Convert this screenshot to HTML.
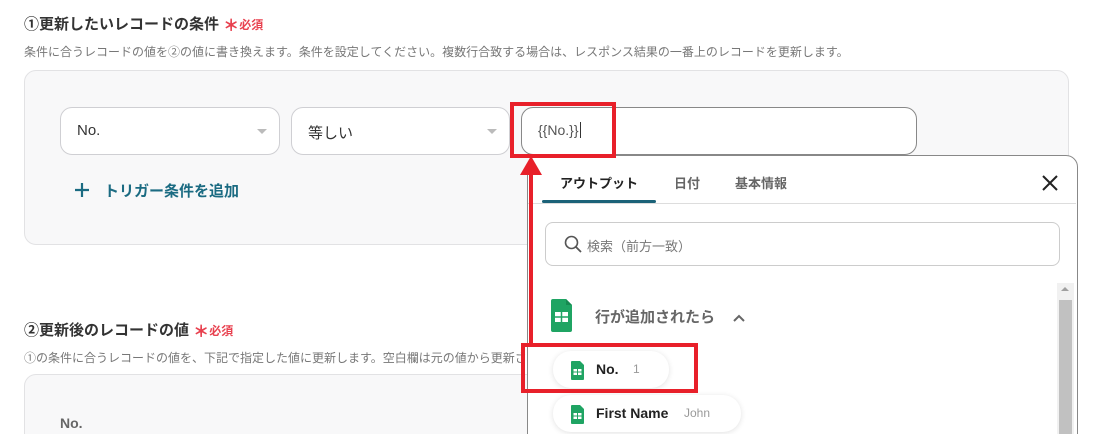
<!DOCTYPE html>
<html><head><meta charset="utf-8"><style>
*{box-sizing:border-box;margin:0;padding:0}
html,body{width:1110px;height:434px;overflow:hidden}
body{background:#fff;font-family:"Liberation Sans","Noto Sans CJK JP",sans-serif;position:relative;color:#333}
.abs{position:absolute}
.t{font-size:15px;font-weight:bold;color:#333}
.req{color:#e8414f;font-size:12px;font-weight:bold}
.req b{font-size:16px;vertical-align:-2px}
.d{font-size:12px;color:#777}
.box{background:#f8f8f9;border:1px solid #e2e2e4;border-radius:12px}
.sel{background:#fff;border:1px solid #cfcfd3;border-radius:12px;font-size:15px;color:#333;padding:14px 0 0 16px}
.car{position:absolute;right:12px;top:21px;width:0;height:0;border-left:5px solid transparent;border-right:5px solid transparent;border-top:5px solid #bbb}
.pill{background:#fff;border-radius:18px;box-shadow:0 1px 6px rgba(0,0,0,.12);font-size:14px;font-weight:bold;color:#222}
.red{border:4px solid #e8202a}
</style></head><body>
<div class="abs t" style="left:24px;top:12px">①更新したいレコードの条件 <span class="req"><b>＊</b>必須</span></div>
<div class="abs d" style="left:24px;top:43px">条件に合うレコードの値を②の値に書き換えます。条件を設定してください。複数行合致する場合は、レスポンス結果の一番上のレコードを更新します。</div>
<div class="abs box" style="left:24px;top:70px;width:1045px;height:175px"></div>
<div class="abs sel" style="left:60px;top:107px;width:220px;height:48px">No.<span class="car"></span></div>
<div class="abs sel" style="left:291px;top:107px;width:219px;height:48px">等しい<span class="car"></span></div>
<div class="abs sel" style="left:521px;top:107px;width:396px;height:48px;border-color:#888;font-size:14px;color:#555">{{No.}}<span style="border-left:1px solid #333;margin-left:1px"></span></div>
<svg class="abs" style="left:74px;top:182px" width="16" height="16"><path d="M8 1V15M1 8H15" stroke="#1b6b82" stroke-width="2.2"/></svg>
<div class="abs" style="left:104px;top:180px;font-size:15px;font-weight:bold;color:#1b6b82">トリガー条件を追加</div>

<div class="abs t" style="left:24px;top:318px">②更新後のレコードの値 <span class="req"><b>＊</b>必須</span></div>
<div class="abs d" style="left:24px;top:349px">①の条件に合うレコードの値を、下記で指定した値に更新します。空白欄は元の値から更新されません。</div>
<div class="abs box" style="left:24px;top:374px;width:1045px;height:80px"></div>
<div class="abs" style="left:60px;top:415px;font-size:14px;font-weight:bold;color:#666">No.</div>

<div class="abs" style="left:527px;top:155px;width:551px;height:300px;background:#fff;border:1px solid #888;border-radius:12px"></div>
<div class="abs" style="left:560px;top:173px;font-size:13px;font-weight:bold;color:#222">アウトプット</div>
<div class="abs" style="left:674px;top:173px;font-size:13px;font-weight:bold;color:#666">日付</div>
<div class="abs" style="left:735px;top:173px;font-size:13px;font-weight:bold;color:#666">基本情報</div>
<div class="abs" style="left:528px;top:203px;width:548px;height:1px;background:#ddd"></div>
<div class="abs" style="left:542px;top:200px;width:114px;height:3px;background:#1b6278;border-radius:2px"></div>
<svg class="abs" style="left:1042px;top:175px" width="16" height="16"><path d="M1 1L15 15M15 1L1 15" stroke="#222" stroke-width="2"/></svg>
<div class="abs" style="left:545px;top:222px;width:515px;height:44px;border:1px solid #ccc;border-radius:8px"></div>
<svg class="abs" style="left:564px;top:235px" width="18" height="18"><circle cx="7.5" cy="7.5" r="6" fill="none" stroke="#555" stroke-width="1.6"/><path d="M12 12L17 17" stroke="#555" stroke-width="1.8"/></svg>
<div class="abs" style="left:587px;top:236px;font-size:13px;color:#777">検索（前方一致）</div>
<div class="abs" style="left:1057px;top:283px;width:17px;height:160px;background:#f1f1f1"></div>
<div class="abs" style="left:1059px;top:300px;width:13px;height:140px;background:#c1c1c1"></div>
<div class="abs" style="left:1061px;top:287px;width:0;height:0;border-left:4px solid transparent;border-right:4px solid transparent;border-bottom:4px solid #a0a0a0"></div>
<svg class="abs" style="left:551px;top:299px" width="21" height="33"><path d="M0 2Q0 0 2 0H15L21 6V31Q21 33 19 33H2Q0 33 0 31Z" fill="#1fa463"/><path d="M15 0V6H21Z" fill="#168a51"/><rect x="4" y="13" width="13" height="10" fill="#fff"/><path d="M4 18H17M10.5 13V23" stroke="#1fa463" stroke-width="1.5"/></svg>
<div class="abs" style="left:595px;top:306px;font-size:15px;font-weight:bold;color:#666">行が追加されたら</div>
<svg class="abs" style="left:732px;top:313px" width="14" height="10"><path d="M2 8L7 3L12 8" fill="none" stroke="#666" stroke-width="2"/></svg>
<div class="abs pill" style="left:553px;top:351px;width:116px;height:37px"><svg class="abs" style="left:18px;top:10px" width="13" height="19"><path d="M0 1Q0 0 1 0H9L13 4V18Q13 19 12 19H1Q0 19 0 18Z" fill="#1fa463"/><rect x="2.5" y="8" width="8" height="6" fill="#fff"/><path d="M2.5 11H10.5M6.5 8V14" stroke="#1fa463"/></svg><span class="abs" style="left:43px;top:10px">No.</span><span class="abs" style="left:80px;top:11px;font-size:12px;font-weight:normal;color:#999">1</span></div>
<div class="abs pill" style="left:553px;top:395px;width:188px;height:37px"><svg class="abs" style="left:18px;top:10px" width="13" height="19"><path d="M0 1Q0 0 1 0H9L13 4V18Q13 19 12 19H1Q0 19 0 18Z" fill="#1fa463"/><rect x="2.5" y="8" width="8" height="6" fill="#fff"/><path d="M2.5 11H10.5M6.5 8V14" stroke="#1fa463"/></svg><span class="abs" style="left:43px;top:10px">First Name</span><span class="abs" style="left:131px;top:11px;font-size:12px;font-weight:normal;color:#999">John</span></div>

<div class="abs red" style="left:510px;top:102px;width:106px;height:56px"></div>
<div class="abs red" style="left:521px;top:343px;width:177px;height:50px"></div>
<div class="abs" style="left:529px;top:172px;width:4px;height:173px;background:#e8202a"></div>
<div class="abs" style="left:520px;top:156px;width:0;height:0;border-left:11px solid transparent;border-right:11px solid transparent;border-bottom:19px solid #e8202a"></div>
</body></html>
